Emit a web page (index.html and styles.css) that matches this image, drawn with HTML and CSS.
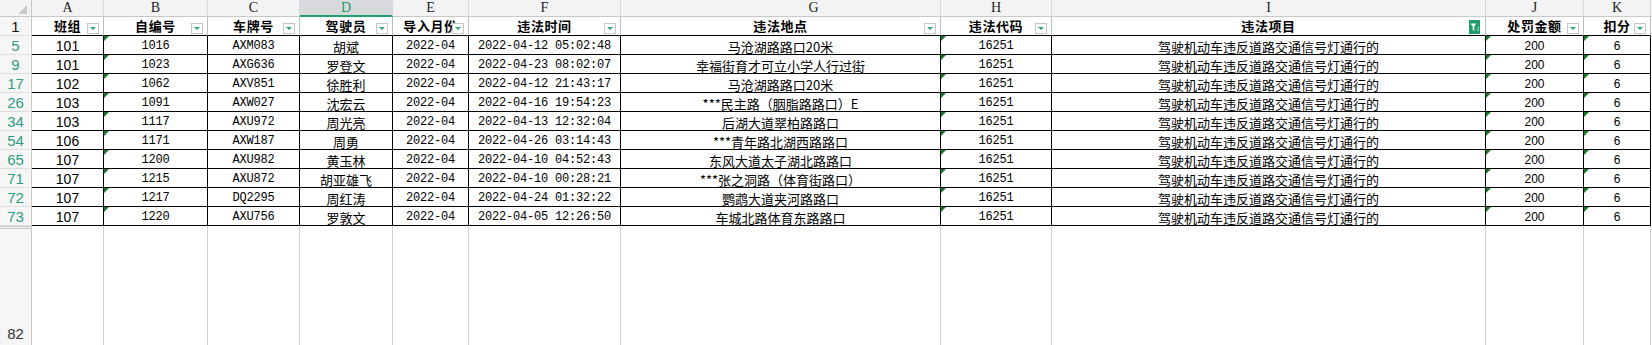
FILE: index.html
```html
<!DOCTYPE html>
<html lang="zh-CN">
<head>
<meta charset="utf-8">
<title>Sheet</title>
<link rel="stylesheet" href="styles.css">
</head>
<body>
<div class="sheet">
  <!-- column letters -->
  <div class="corner"><svg width="32" height="17" viewBox="0 0 32 17"><polygon points="27,5 27,14 18,14" fill="#c9c9c9"/></svg></div>
  <div class="col">A</div>
  <div class="col">B</div>
  <div class="col">C</div>
  <div class="col sel">D</div>
  <div class="col">E</div>
  <div class="col">F</div>
  <div class="col gl">G</div>
  <div class="col">H</div>
  <div class="col">I</div>
  <div class="col">J</div>
  <div class="col">K</div>
  <div class="col fillc"></div>

  <!-- header row -->
  <div class="rh one">1</div>
  <div class="h">班组<span class="fb"></span></div>
  <div class="h">自编号<span class="fb"></span></div>
  <div class="h">车牌号<span class="fb"></span></div>
  <div class="h">驾驶员<span class="fb"></span></div>
  <div class="h">导入月份<span class="fb"></span></div>
  <div class="h">违法时间<span class="fb"></span></div>
  <div class="h">违法地点<span class="fb"></span></div>
  <div class="h">违法代码<span class="fb"></span></div>
  <div class="h">违法项目<span class="fa"><svg width="11" height="14" viewBox="0 0 11 14"><rect width="11" height="14" fill="#1f9d6b"/><path d="M1.5 3.5h6l-2.2 3v4.5l-1.6-1v-3.5z" fill="#fff"/><rect x="8.5" y="7" width="1.2" height="1.2" fill="#fff"/><rect x="8.5" y="9.5" width="1.2" height="1.2" fill="#fff"/></svg></span></div>
  <div class="h">处罚金额<span class="fb"></span></div>
  <div class="h">扣分<span class="fb"></span></div>
  <div class="fill"></div>

  <div class="rh">5</div><div class="c a">101</div><div class="c m tx">1016</div><div class="c m">AXM083</div><div class="c z">胡斌</div><div class="c m">2022-04</div><div class="c m">2022-04-12 05:02:48</div><div class="c z">马沧湖路路口20米</div><div class="c m tx">16251</div><div class="c z">驾驶机动车违反道路交通信号灯通行的</div><div class="c s tx">200</div><div class="c s tx">6</div><div class="fill"></div>

  <div class="rh">9</div><div class="c a">101</div><div class="c m tx">1023</div><div class="c m">AXG636</div><div class="c z">罗登文</div><div class="c m">2022-04</div><div class="c m">2022-04-23 08:02:07</div><div class="c z">幸福街育才可立小学人行过街</div><div class="c m tx">16251</div><div class="c z">驾驶机动车违反道路交通信号灯通行的</div><div class="c s tx">200</div><div class="c s tx">6</div><div class="fill"></div>

  <div class="rh">17</div><div class="c a">102</div><div class="c m tx">1062</div><div class="c m">AXV851</div><div class="c z">徐胜利</div><div class="c m">2022-04</div><div class="c m">2022-04-12 21:43:17</div><div class="c z">马沧湖路路口20米</div><div class="c m tx">16251</div><div class="c z">驾驶机动车违反道路交通信号灯通行的</div><div class="c s tx">200</div><div class="c s tx">6</div><div class="fill"></div>

  <div class="rh">26</div><div class="c a">103</div><div class="c m tx">1091</div><div class="c m">AXW027</div><div class="c z">沈宏云</div><div class="c m">2022-04</div><div class="c m">2022-04-16 19:54:23</div><div class="c z">***民主路（胭脂路路口）E</div><div class="c m tx">16251</div><div class="c z">驾驶机动车违反道路交通信号灯通行的</div><div class="c s tx">200</div><div class="c s tx">6</div><div class="fill"></div>

  <div class="rh">34</div><div class="c a">103</div><div class="c m tx">1117</div><div class="c m">AXU972</div><div class="c z">周光亮</div><div class="c m">2022-04</div><div class="c m">2022-04-13 12:32:04</div><div class="c z">后湖大道翠柏路路口</div><div class="c m tx">16251</div><div class="c z">驾驶机动车违反道路交通信号灯通行的</div><div class="c s tx">200</div><div class="c s tx">6</div><div class="fill"></div>

  <div class="rh">54</div><div class="c a">106</div><div class="c m tx">1171</div><div class="c m">AXW187</div><div class="c z">周勇</div><div class="c m">2022-04</div><div class="c m">2022-04-26 03:14:43</div><div class="c z">***青年路北湖西路路口</div><div class="c m tx">16251</div><div class="c z">驾驶机动车违反道路交通信号灯通行的</div><div class="c s tx">200</div><div class="c s tx">6</div><div class="fill"></div>

  <div class="rh">65</div><div class="c a">107</div><div class="c m tx">1200</div><div class="c m">AXU982</div><div class="c z">黄玉林</div><div class="c m">2022-04</div><div class="c m">2022-04-10 04:52:43</div><div class="c z">东风大道太子湖北路路口</div><div class="c m tx">16251</div><div class="c z">驾驶机动车违反道路交通信号灯通行的</div><div class="c s tx">200</div><div class="c s tx">6</div><div class="fill"></div>

  <div class="rh">71</div><div class="c a">107</div><div class="c m tx">1215</div><div class="c m">AXU872</div><div class="c z">胡亚雄飞</div><div class="c m">2022-04</div><div class="c m">2022-04-10 00:28:21</div><div class="c z">***张之洞路（体育街路口）</div><div class="c m tx">16251</div><div class="c z">驾驶机动车违反道路交通信号灯通行的</div><div class="c s tx">200</div><div class="c s tx">6</div><div class="fill"></div>

  <div class="rh">72</div><div class="c a">107</div><div class="c m tx">1217</div><div class="c m">DQ2295</div><div class="c z">周红涛</div><div class="c m">2022-04</div><div class="c m">2022-04-24 01:32:22</div><div class="c z">鹦鹉大道夹河路路口</div><div class="c m tx">16251</div><div class="c z">驾驶机动车违反道路交通信号灯通行的</div><div class="c s tx">200</div><div class="c s tx">6</div><div class="fill"></div>

  <div class="rh">73</div><div class="c a">107</div><div class="c m tx">1220</div><div class="c m">AXU756</div><div class="c z">罗敦文</div><div class="c m">2022-04</div><div class="c m">2022-04-05 12:26:50</div><div class="c z">车城北路体育东路路口</div><div class="c m tx">16251</div><div class="c z">驾驶机动车违反道路交通信号灯通行的</div><div class="c s tx">200</div><div class="c s tx">6</div><div class="fill"></div>

  <!-- empty tall row after hidden rows -->
  <div class="rh last">82</div>
  <div class="e"></div><div class="e"></div><div class="e"></div><div class="e"></div><div class="e"></div><div class="e"></div><div class="e"></div><div class="e"></div><div class="e"></div><div class="e"></div><div class="e"></div>
  <div class="fill"></div>
</div>
</body>
</html>
```

FILE: styles.css
```css
* { box-sizing: border-box; }

html, body {
  margin: 0;
  padding: 0;
  background: #fff;
  overflow: hidden;
}

.sheet {
  display: grid;
  grid-template-columns: 32px 72px 104px 92px 93px 76px 152px 320px 111px 434px 98px 67px 1fr;
  grid-template-rows: 17px 19px repeat(10, 19px) 1fr;
  width: 1652px;
  height: 345px;
  font-family: "Noto Sans CJK SC", sans-serif;
  color: #000;
}

/* column letter bar */
.corner {
  background: #f3f3f3;
  border-right: 1px solid #c9c9c9;
  border-bottom: 1px solid #c9c9c9;
}
.corner svg { display: block; }

.col {
  background: #f3f3f3;
  border-right: 1px solid #d9d9d9;
  border-bottom: 1px solid #c9c9c9;
  font-family: "Liberation Serif", serif;
  font-size: 14px;
  line-height: 16px;
  color: #222;
  text-align: center;
}
.col.sel {
  background: #d7d9dd;
  color: #1f9d6b;
  border-bottom: 2px solid #21a16d;
}
.col.gl { padding-left: 66px; }
.col.fillc { border-right: none; }

/* row header */
.rh {
  background: #f6f6f6;
  border-right: 1px solid #c9c9c9;
  border-bottom: 1px solid #dedede;
  font-family: "Liberation Sans", sans-serif;
  font-size: 15px;
  line-height: 19px;
  color: #2f9d80;
  text-align: center;
}
.rh.one { color: #111; line-height: 19px; }
.rh.last {
  color: #333;
  border-bottom: none;
  border-top: 3px double #c9c9c9;
  display: flex;
  align-items: flex-end;
  justify-content: center;
  padding-bottom: 2px;
}

/* header row */
.h {
  position: relative;
  border-right: 1px solid #bdbdbd;
  border-bottom: 1px solid #000;
  font-size: 13px;
  font-weight: 700;
  letter-spacing: 0.6px;
  line-height: 18px;
  text-align: center;
  white-space: nowrap;
  overflow: hidden;
}
.fb {
  position: absolute;
  right: 4px;
  top: 6px;
  width: 12px;
  height: 11px;
  background: #fff;
  border: 1px solid #c6c6c6;
}
.fb::after {
  content: "";
  position: absolute;
  left: 2px;
  top: 3px;
  border-left: 3px solid transparent;
  border-right: 3px solid transparent;
  border-top: 3px solid #2aa382;
}
.fa {
  position: absolute;
  right: 5px;
  top: 3px;
  width: 11px;
  height: 14px;
}
.fa svg { display: block; }

/* data cells */
.c {
  position: relative;
  border-right: 1px solid #000;
  border-bottom: 1px solid #000;
  text-align: center;
  white-space: nowrap;
  padding-top: 2px;
  line-height: 17px;
}
.c.a {
  font-family: "Liberation Sans", sans-serif;
  font-size: 14px;
}
.c.m {
  font-family: "Liberation Mono", monospace;
  font-size: 12px;
  letter-spacing: -0.2px;
}
.c.z {
  font-size: 13px;
}
.c.s {
  font-family: "Liberation Sans", sans-serif;
  font-size: 12px;
}
.c.tx::before {
  content: "";
  position: absolute;
  left: 0;
  top: 0;
  border-top: 5px solid #137a25;
  border-right: 5px solid transparent;
}

.fill { background: #fff; }

/* empty area */
.e {
  border-right: 1px solid #cfd3d8;
}
```
